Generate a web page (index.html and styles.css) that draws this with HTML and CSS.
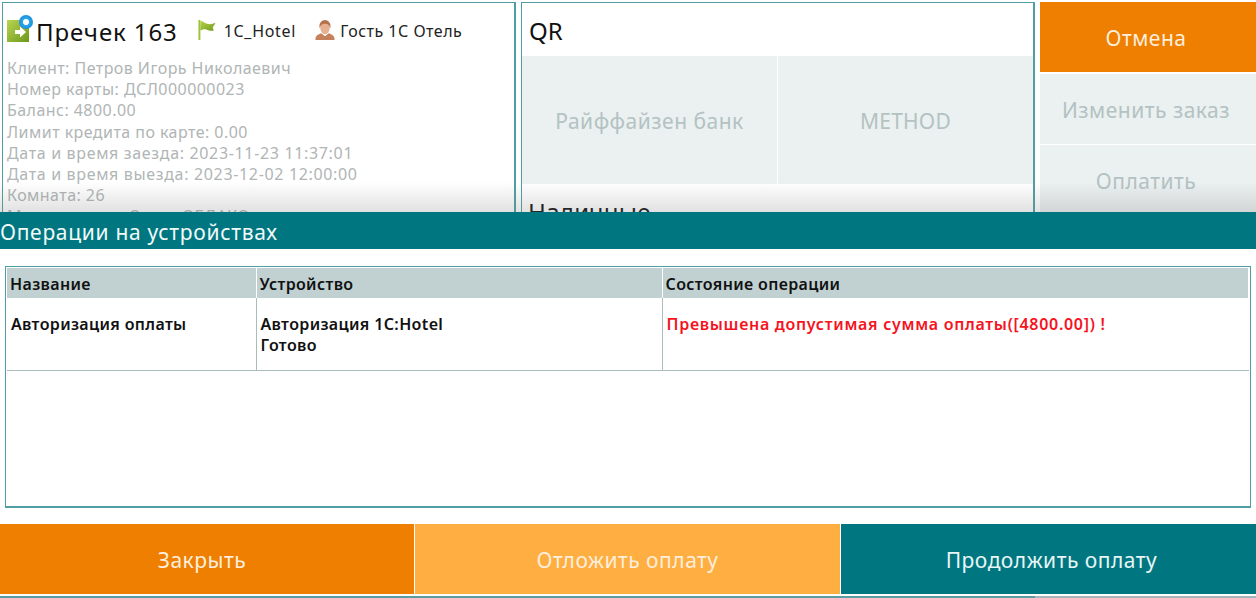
FILE: index.html
```html
<!DOCTYPE html>
<html lang="ru">
<head>
<meta charset="utf-8">
<title>Операции на устройствах</title>
<link rel="stylesheet" href="styles.css">
</head>
<body>
<div class="app">
  <section class="panel info">
    <div class="head">
      <svg class="ico-doc" viewBox="0 0 26 28" width="26" height="28">
        <defs>
          <linearGradient id="g1" x1="0" y1="0" x2="1" y2="1"><stop offset="0" stop-color="#bcd452"/><stop offset="1" stop-color="#6c981c"/></linearGradient>
          <radialGradient id="g2"><stop offset="0" stop-color="#fff"/><stop offset=".38" stop-color="#fff"/><stop offset=".5" stop-color="#2aa7ea"/><stop offset="1" stop-color="#1d8fdc"/></radialGradient>
          <linearGradient id="g3" x1="0" y1="0" x2="1" y2="1"><stop offset="0" stop-color="#b8d24c"/><stop offset="1" stop-color="#6f9c1c"/></linearGradient>
        </defs>
        <rect x="0" y="5" width="22" height="22" fill="url(#g1)"/>
        <path d="M8 15h5v-3.500l6 5.500-6 5.500V19H8z" fill="#fff"/>
        <circle cx="19" cy="7" r="7" fill="url(#g2)"/>
      </svg>
      <h1 class="title">Пречек 163</h1>
      <svg class="ico-flag" viewBox="0 0 22 21" width="22" height="20">
        <path d="M1 0h2v21H1z" fill="#9cc234"/>
        <path d="M3 1c3 0 4 2 7 3 3 1 6 0 9-1-1 2-2 3-3 5 0 1 1 2 1 3-3 1-5 0-8-1-2-1-4 0-6 1z" fill="url(#g3)"/>
      </svg>
      <span class="tag tag-hotel">1C_Hotel</span>
      <svg class="ico-user" viewBox="0 0 22 21" width="22" height="20">
        <path d="M1 20c0-4 4-5 6-6l4 3 4-3c2 1 6 2 6 6v1H1z" fill="#c5805c"/>
        <ellipse cx="11" cy="8" rx="5" ry="7" fill="#e6b092"/>
        <path d="M5.500 9C4 3 8 0 11 0s7 3 5.500 9c-.5-3-2-5-5.500-5S6 6 5.500 9z" fill="#b5704c"/>
      </svg>
      <span class="tag">Гость 1С Отель</span>
    </div>
    <div class="details">
      <div>Клиент: Петров Игорь Николаевич</div>
      <div>Номер карты: ДСЛ000000023</div>
      <div>Баланс: 4800.00</div>
      <div>Лимит кредита по карте: 0.00</div>
      <div class="num">Дата и время заезда: 2023-11-23 11:37:01</div>
      <div class="num">Дата и время выезда: 2023-12-02 12:00:00</div>
      <div>Комната: 26</div>
      <div>Мероприятие: Отель ОБЛАКО</div>
    </div>
  </section>
  <section class="panel pay">
    <h2 class="pay-title">QR</h2>
    <div class="methods">
      <div class="method">Райффайзен банк</div>
      <div class="method method-en">METHOD</div>
    </div>
    <h2 class="pay-title cash">Наличные</h2>
  </section>
  <nav class="actions">
    <div class="act act-cancel">Отмена</div>
    <div class="act">Изменить заказ</div>
    <div class="act">Оплатить</div>
  </nav>
</div>

<div class="fade"></div>
<div class="strip"></div>
<div class="dialog">
  <div class="dialog-head">Операции на устройствах</div>
  <div class="dialog-body">
    <div class="table-box">
      <table class="ops">
        <colgroup><col class="c1"><col class="c2"><col class="c3"></colgroup>
        <thead>
          <tr><th>Название</th><th>Устройство</th><th>Состояние операции</th></tr>
        </thead>
        <tbody>
          <tr>
            <td>Авторизация оплаты</td>
            <td>Авторизация 1С:Hotel<br>Готово</td>
            <td class="err">Превышена допустимая сумма оплаты([4800.00]) !</td>
          </tr>
        </tbody>
      </table>
    </div>
  </div>
  <div class="dialog-btns">
    <div class="btn btn-close">Закрыть</div>
    <div class="btn btn-later">Отложить оплату</div>
    <div class="btn btn-next">Продолжить оплату</div>
  </div>
</div>
</body>
</html>
```
FILE: styles.css
```css
* { box-sizing: border-box; }
html, body { margin: 0; padding: 0; }
body {
  width: 1256px;
  height: 598px;
  overflow: hidden;
  position: relative;
  background: #fff;
  font-family: "Noto Sans", "Open Sans", sans-serif;
}
.app {
  display: grid;
  grid-template-columns: 514px 514px 217px;
  column-gap: 5px;
  height: 598px;
  padding: 2px 0 0 2px;
}
.panel {
  border-style: solid;
  border-width: 1px 2px 2px 1px;
  border-color: #4f9ea3;
  overflow: hidden;
  min-height: 0;
}
.info { padding: 0 4px; }
.head {
  display: flex;
  align-items: center;
  height: 47px;
  padding-top: 9px;
}
.ico-doc { margin: 0 3px 0 0; flex: none; transform: translateY(-2px); }
.title { font-size: 24px; font-weight: 400; margin: 0 19px 0 0; color: #111; letter-spacing: .9px; }
.ico-flag { flex: none; margin-right: 5px; transform: translateY(-1px); }
.ico-user { flex: none; margin: 0 4px 0 18px; transform: translateY(-1px); }
.tag { font-size: 16px; letter-spacing: .5px; color: #222; }
.tag-hotel { letter-spacing: .7px; }
.details {
  margin-top: 8px;
  font-size: 16px;
  letter-spacing: .45px;
  line-height: 21.200px;
  color: #b0b5b5;
  white-space: nowrap;
}
.details .num { letter-spacing: .66px; }
.pay-title {
  font-size: 24px;
  font-weight: 400;
  color: #111;
  margin: 0;
  height: 53px;
  line-height: 56px;
  padding-left: 7px;
}
.cash { letter-spacing: .3px; padding-left: 6px; }
.methods { display: grid; grid-template-columns: 1fr 1fr; gap: 1px; }
.method {
  background: #ebf0f0;
  height: 128px;
  padding-top: 2px;
  display: flex;
  align-items: center;
  justify-content: center;
  font-size: 21px;
  letter-spacing: .5px;
  color: #b3c2c2;
}
.method-en { letter-spacing: .2px; }
.actions { display: flex; flex-direction: column; }
.act {
  height: 70px;
  margin-bottom: 1.500px;
  padding: 2px 5px 0 0;
  background: #ebf0f0;
  display: flex;
  align-items: center;
  justify-content: center;
  font-size: 21px;
  letter-spacing: .5px;
  color: #b3c2c2;
}
.act-cancel { background: #ef7f00; color: #fdeedd; }
.fade {
  position: absolute;
  left: 0;
  right: 0;
  top: 182px;
  height: 30px;
  background: linear-gradient(to bottom, rgba(120,120,120,0), rgba(120,120,120,.22));
}
.strip {
  position: absolute;
  left: 0;
  right: 0;
  top: 596px;
  height: 2px;
  background: linear-gradient(to right, #5b9ca1 1035px, #a7b5b7 1035px);
}
.dialog {
  position: absolute;
  left: 0;
  top: 212px;
  width: 1256px;
  height: 384px;
  background: #fff;
  display: flex;
  flex-direction: column;
}
.dialog-head {
  background: #007780;
  color: #f2fafa;
  height: 37px;
  line-height: 41px;
  font-size: 21px;
  letter-spacing: .7px;
  flex: none;
}
.dialog-body { padding: 17px 5px 16px 5px; flex: none; height: 275px; }
.table-box {
  border: 1px solid #4f9ea3;
  border-bottom-width: 2px;
  height: 242px;
  padding: 1px;
}
.ops { border-collapse: collapse; table-layout: fixed; width: 100%; font-size: 16px; letter-spacing: .35px; }
.c1 { width: 249px; }
.c2 { width: 406px; }
.ops th {
  background: #c1d1d1;
  color: #111;
  font-weight: 600;
  text-align: left;
  height: 30px;
  padding: 2px 3px 0;
  border-right: 1px solid #fff;
}
.ops td {
  height: 72px;
  vertical-align: top;
  padding: 16px 4px 0;
  line-height: 21px;
  font-weight: 600;
  color: #111;
  border-right: 1px solid #a9bdbd;
  border-bottom: 1px solid #a9bdbd;
}
.ops td:last-child { border-right: 0; }
.ops td.err { color: #f5141e; letter-spacing: .7px; }
.dialog-btns {
  display: grid;
  grid-template-columns: 414px 425px 1fr;
  column-gap: 1px;
  height: 70px;
}
.btn {
  display: flex;
  align-items: center;
  justify-content: center;
  padding-top: 2px;
  color: #fdeedd;
  font-size: 21px;
  letter-spacing: .5px;
}
.btn-close { background: #ef7f00; padding-right: 10px; }
.btn-later { background: #ffae41; }
.btn-next { background: #007780; color: #e8f6f6; padding-left: 6px; }
```
